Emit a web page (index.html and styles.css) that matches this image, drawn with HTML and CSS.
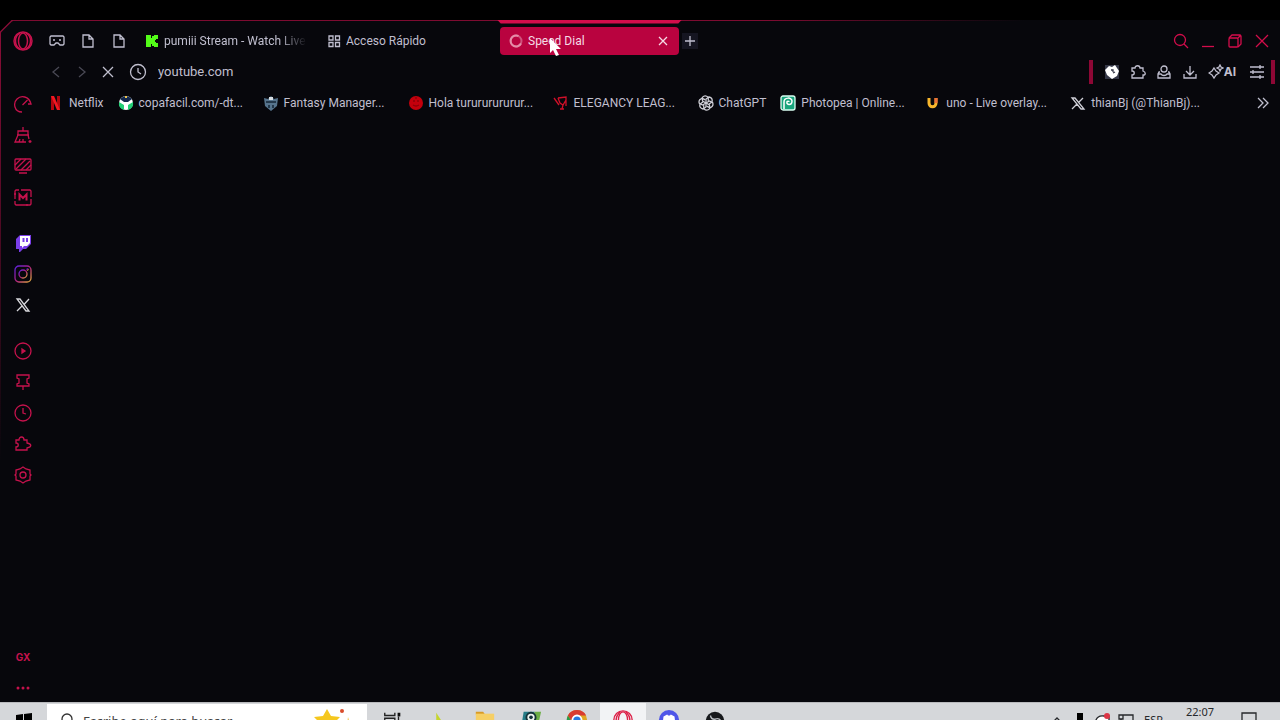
FILE: index.html
```html
<!DOCTYPE html>
<html lang="es">
<head>
    <meta charset="UTF-8">
    <title>Speed Dial</title>
    <link rel="stylesheet" href="styles.css">
</head>
<body>
    <div class="browser">
        <svg class="corner" viewBox="0 0 13 13"><path class="cut" d="M0 0H12L0 12Z"/><path d="M13 .5H12L.5 12V13"/></svg>

        <nav class="sidebar" aria-label="Barra lateral">
            <button class="side-btn logo" aria-label="Opera GX"><svg viewBox="0 0 20 20"><circle cx="10" cy="10" r="9"/><ellipse cx="10" cy="10" rx="4.500" ry="8"/><path d="M7 2C1 5 1 15 7 18M13 2c6 3 6 13 0 16"/></svg></button>

            <div class="side-group">
                <button class="side-btn" aria-label="GX Control"><svg viewBox="0 0 18 18"><path d="M8 17C0 17-1 8 3 4s12-3 14 5h-3M8.500 10l5-5"/></svg></button>
                <button class="side-btn" aria-label="GX Cleaner"><svg viewBox="0 0 18 18"><path d="M9 1v4M4 9V5h10v4M3 9h12M4 9l-3 7h11M14 9l1 4M5 16l1-3M9 16v-3"/><path d="M16 14v3M14.500 15.500h3"/></svg></button>
                <button class="side-btn" aria-label="Fondos"><svg viewBox="0 0 18 18"><rect x="1" y="2" width="16" height="11" rx="1"/><path d="M1 8l6-6M2 12L12 2M7 13l9-9M12 13l5-5M5 16h8"/></svg></button>
                <button class="side-btn" aria-label="Mods"><svg viewBox="0 0 18 18"><path d="M17 11v5l-1 1H2l-1-1v-3M1 11V3l1-1h3M7 2h9l1 1v6M0 6h2M13 16v2"/><path class="bold" d="M5.500 12.500V6.500L9 10l3.500-3.500v6"/></svg></button>
            </div>

            <div class="side-group">
                <button class="side-btn" aria-label="Twitch"><svg viewBox="0 0 18 18"><path fill="#7a3ee8" stroke="none" d="M2 5l4-4h11v9l-5 5H9l-3 3H5v-3H2z"/><path fill="#fff" stroke="none" d="M6 2h10v7l-3 3h-3l-2 2v-2H6z"/><path stroke="#7a3ee8" stroke-width="2" d="M9.500 4v4M13 4v4"/></svg></button>
                <button class="side-btn" aria-label="Instagram"><svg viewBox="0 0 18 18"><defs><linearGradient id="ig" x1="0" y1="0" x2="1" y2="1"><stop offset="0" stop-color="#5a22e0"/><stop offset=".5" stop-color="#b02080"/><stop offset="1" stop-color="#e8b53d"/></linearGradient></defs><g stroke="url(#ig)"><rect x="1" y="1" width="16" height="16" rx="4"/><circle cx="9" cy="9" r="4"/><circle cx="13.500" cy="4.500" r=".5"/></g></svg></button>
                <button class="side-btn x" aria-label="X"><svg viewBox="0 0 18 18"><path d="M3 3h3l9 12h-3zM15 3l-5 5.500M8 10l-5 5"/></svg></button>
            </div>

            <div class="side-group">
                <button class="side-btn" aria-label="Reproductor"><svg viewBox="0 0 18 18"><circle cx="9" cy="9" r="8"/><path class="solid" d="M8 7l3 2-3 2z"/></svg></button>
                <button class="side-btn" aria-label="Tableros"><svg viewBox="0 0 18 18"><path d="M3 2h12v3l-2 1v4l2 1v2H3v-2l2-1V6L3 5zM9 13v4"/></svg></button>
                <button class="side-btn" aria-label="Historial"><svg viewBox="0 0 18 18"><circle cx="9" cy="9" r="8"/><path d="M9 4v5l3 1"/></svg></button>
                <button class="side-btn" aria-label="Extensiones"><svg viewBox="0 0 18 18"><path d="M2 15v-3c3 0 3-4 0-4V5h3c0-4 5-4 5 0h3v3c5 1 5 4 0 5v2z"/></svg></button>
                <button class="side-btn" aria-label="Ajustes"><svg viewBox="0 0 18 18"><path d="M9 1l3 2 4 1v4l1 1-1 1v4l-4 1-3 2-3-2-4-1v-4L1 9l1-1V4l4-1z"/><circle cx="9" cy="9" r="3"/></svg></button>
            </div>

            <div class="side-group bottom">
                <button class="side-btn gx">GX</button>
                <button class="side-btn" aria-label="Más"><svg viewBox="0 0 18 18"><g class="solid dots"><circle cx="4" cy="9" r="1.500"/><circle cx="9" cy="9" r="1.500"/><circle cx="14" cy="9" r="1.500"/></g></svg></button>
            </div>
        </nav>

        <main class="main">
            <div class="tabbar">
                <button class="pin" aria-label="GX Corner"><svg viewBox="0 0 16 16"><path d="M2 3h12l1 1v7l-1 1h-3l-2-2H7l-2 2H2l-1-1V4z"/><path d="M4 7h2M10 7h2"/></svg></button>
                <button class="pin" aria-label="Pestaña fijada 1"><svg viewBox="0 0 16 16"><path d="M3 2h6l4 4v8H3zM9 2v4h4"/></svg></button>
                <button class="pin" aria-label="Pestaña fijada 2"><svg viewBox="0 0 16 16"><path d="M3 2h6l4 4v8H3zM9 2v4h4"/></svg></button>

                <div class="tabs">
                    <button class="tab"><svg viewBox="0 0 16 16"><path fill="#53fc18" stroke="none" d="M2 2h5v3h1V3h2V2h4v4h-2v1h-1v2h1v1h2v4h-4v-1H8v-2H7v3H2z"/></svg><span class="tab-title fade">pumiii Stream - Watch Live</span></button>
                    <button class="tab"><svg viewBox="0 0 16 16"><path d="M3 3h4v4H3zM9.500 3h4v4h-4zM3 9.500h4v4H3zM9.500 9.500h4v4h-4z"/></svg><span class="tab-title">Acceso Rápido</span></button>
                    <div class="tab active">
                        <svg viewBox="0 0 16 16"><circle class="spin-track" cx="8" cy="8" r="5.500"/><path class="spin" d="M13 10.500A5.500 5.500 0 1 1 10.500 3"/></svg>
                        <span class="tab-title">Speed Dial</span>
                        <button class="close" aria-label="Cerrar pestaña"><svg viewBox="0 0 16 16"><path d="M4 4l8 8M12 4l-8 8"/></svg></button>
                        <svg class="cursor" viewBox="0 0 12 18"><path d="M0 0v15l3-3 3 6 3-1-3-6h5z"/></svg>
                    </div>
                    <button class="new-tab" aria-label="Nueva pestaña"><svg viewBox="0 0 14 14"><path d="M7 2v10M2 7h10"/></svg></button>
                </div>

                <div class="window-controls">
                    <button aria-label="Buscar"><svg viewBox="0 0 16 16"><circle cx="7" cy="7" r="5.500"/><path d="M11 11l4 4"/></svg></button>
                    <button aria-label="Minimizar"><svg viewBox="0 0 16 16"><path d="M2 13.500h12"/></svg></button>
                    <button aria-label="Restaurar"><svg viewBox="0 0 16 16"><rect x="2" y="5" width="9" height="9" rx="1"/><path d="M2 5l3-3h8l1 1v8l-3 3M11 5l3-3"/></svg></button>
                    <button aria-label="Cerrar"><svg viewBox="0 0 16 16"><path d="M2 2l12 12M14 2L2 14"/></svg></button>
                </div>
            </div>

            <div class="addressbar">
                <button class="dim" aria-label="Atrás"><svg viewBox="0 0 16 16"><path d="M11 3L5 8l6 5"/></svg></button>
                <button class="dim" aria-label="Adelante"><svg viewBox="0 0 16 16"><path d="M5 3l6 5-6 5"/></svg></button>
                <button aria-label="Detener"><svg viewBox="0 0 16 16"><path d="M3 3l10 10M13 3L3 13"/></svg></button>
                <label class="url-icon" for="url" aria-label="Dirección"><svg viewBox="0 0 18 18"><circle cx="9" cy="9" r="7.500"/><path d="M9 5v4l3 2"/></svg></label>
                <input class="url" id="url" type="text" value="youtube.com">

                <div class="extensions">
                    <button aria-label="BetterTTV"><svg viewBox="0 0 16 16"><path fill="#343747" stroke="none" d="M1 1h14v14H1z"/><path fill="#fff" stroke="none" d="M1 6l4-4 3 1 3-2 4 6-2 5-5 3-5-4z"/><path stroke="#343747" d="M7 6l2 0v2M9 9l2-1"/></svg></button>
                    <button aria-label="Extensiones"><svg viewBox="0 0 16 16"><path d="M2 14v-3c3 0 3-4 0-4V4h3c0-3 5-3 5 0h3v3c3 1 3 4 0 4v3z"/></svg></button>
                    <button aria-label="Perfil"><svg viewBox="0 0 16 16"><circle cx="8" cy="5" r="3"/><path d="M4 8H3l-1 2v4h12v-4l-1-2h-1M2 10h3c1 2 5 2 6 0h3"/></svg></button>
                    <button aria-label="Descargas"><svg viewBox="0 0 16 16"><path d="M8 2v9M4 7l4 4 4-4M2 10v4h12v-4"/></svg></button>
                    <button class="ai"><svg viewBox="0 0 16 16"><path d="M6 4l2 3 3 2-3 2-2 3-2-3-3-2 3-2zM12 1l1 2 2 1-2 1-1 2-1-2-2-1 2-1z"/></svg>AI</button>
                    <button aria-label="Configuración fácil"><svg viewBox="0 0 16 16"><path d="M1 3h14M1 8h14M1 13h14M11 1v4M4 6v4M11 11v4"/></svg></button>
                </div>
            </div>

            <div class="bookmarks">
                <a class="bookmark" href="#"><svg viewBox="0 0 16 16"><path fill="#b1060f" d="M3 1h3v14H3zM9 1h3v14H9z"/><path fill="#f01822" d="M3 1h3l6 14H9z"/></svg>Netflix</a>
                <a class="bookmark wide" href="#"><svg viewBox="0 0 16 16"><circle cx="8" cy="8" r="7" fill="#fff"/><path fill="#13284c" d="M2 4q6-6 12 0l-4 3H6z"/><path fill="#22cf75" d="M1 7l5 3v5Q0 13 1 7zM15 7l-5 3v5q6-2 5-8z"/><path fill="#f1c54d" d="M7 1h2v2H7z"/></svg>copafacil.com/-dt...</a>
                <a class="bookmark wide" href="#"><svg viewBox="0 0 16 16"><path fill="#56748d" d="M1 3l4 1 3-3 3 3 4-1-1 8-6 5-6-5z"/><path fill="#d6dce1" d="M6 2h4v3H6z"/><path fill="#24394c" d="M3 6h10v2H3zM5 10h2v3H5zM9 10h2v3H9z"/></svg>Fantasy Manager...</a>
                <a class="bookmark wide" href="#"><svg viewBox="0 0 16 16"><circle cx="8" cy="8" r="7" fill="#c4000c"/><path fill="none" stroke="#8c0008" d="M5 6h2M9 6h2M5 10q3 2 6 0M8 2v2"/></svg>Hola turururururur...</a>
                <a class="bookmark wide" href="#"><svg viewBox="0 0 16 16"><path fill="none" stroke="#d01029" d="M1 3l5 7M5 3l8-1v3l-3 5-3-2-2-5M10 10l-1 4M7 14h4M13 2v9"/></svg>ELEGANCY LEAG...</a>
                <a class="bookmark" href="#"><svg viewBox="0 0 16 16"><g fill="none" stroke="#d0d0d8"><path id="petal" d="M8 8V4l3-2q4 1 3 5l-3 2"/><use href="#petal" transform="rotate(60 8 8)"/><use href="#petal" transform="rotate(120 8 8)"/><use href="#petal" transform="rotate(180 8 8)"/><use href="#petal" transform="rotate(240 8 8)"/><use href="#petal" transform="rotate(300 8 8)"/></g></svg>ChatGPT</a>
                <a class="bookmark wide" href="#"><svg viewBox="0 0 16 16"><rect x="1" y="1" width="14" height="14" rx="2" fill="#18a47c" stroke="#d9fff2"/><path fill="none" stroke="#fff" stroke-width="1.500" d="M4 14V7c0-5 8-5 8-1 0 5-6 4-5 1 0-1 2-1 2 0"/></svg>Photopea | Online...</a>
                <a class="bookmark wide" href="#"><svg viewBox="0 0 16 16"><path fill="none" stroke="#f8b62c" stroke-width="3" d="M4 3v5c0 5 7 5 7 0V3"/><path fill="none" stroke="#ee7038" stroke-width="3" d="M11 3v5"/></svg>uno - Live overlay...</a>
                <a class="bookmark wide" href="#"><svg viewBox="0 0 16 16"><path fill="none" stroke="#d0d0d8" d="M2 3h3l9 11h-3zM13 3L9 7M7 9l-5 5"/></svg>thianBj (@ThianBj)...</a>
                <button class="more" aria-label="Más marcadores"><svg viewBox="0 0 16 16"><path d="M4 3l5 5-5 5M9 3l5 5-5 5"/></svg></button>
            </div>
        </main>
    </div>

    <footer class="taskbar">
        <button class="start" aria-label="Inicio"><svg viewBox="0 0 16 16"><path d="M0 2l7-1v7H0zM8 1l8-1v8H8zM0 9h7v6l-7-1zM8 9h8v7l-8-1z"/></svg></button>
        <div class="search">
            <svg viewBox="0 0 16 16"><circle cx="8" cy="6" r="5"/><path d="M5 10l-5 5"/></svg>
            <input type="text" placeholder="Escribe aquí para buscar" aria-label="Escribe aquí para buscar">
            <svg class="star" viewBox="0 0 40 30"><path fill="#f5c71e" d="M12 3l4 7 9 1-7 7 2 9-8-4-8 4 2-9-7-7 9-1z"/><circle cx="27" cy="5" r="2" fill="#d94b2b"/><path fill="#f3cc55" d="M33 11l1 3 3 1-5 3z"/></svg>
        </div>
        <div class="apps">
            <button aria-label="Vista de tareas"><svg viewBox="0 0 24 24"><path fill="none" stroke="#222" stroke-width="1.500" d="M3 3v3h11V3M3 9h11v7H3zM18 7v11"/><path fill="#111" d="M17 3h3v4h-3z"/></svg></button>
            <button aria-label="Editor"><svg viewBox="0 0 24 24"><path fill="#c5d52b" d="M9 3l11 17H9z"/></svg></button>
            <button aria-label="Explorador de archivos"><svg viewBox="0 0 24 24"><path fill="#d99b26" d="M2 2h8l2 3H2z"/><path fill="#f6cf65" d="M2 4h20v16H2z"/></svg></button>
            <button aria-label="Juego"><svg viewBox="0 0 24 24"><path fill="#267c86" d="M4 2h12l-2 18H1z"/><path fill="#6cae45" d="M16 2h7l-4 18h-6z"/><circle cx="12" cy="8" r="5" fill="#eef4ef" stroke="#143238" stroke-width="2"/><circle cx="12" cy="8" r="2" fill="#143238"/></svg></button>
            <button aria-label="Chrome"><svg viewBox="0 0 24 24"><circle cx="12" cy="11" r="11" fill="#e0a723"/><path fill="#d93b30" d="M2 6q3-6 10-6t10 6H12L7 13z"/><path fill="#2c9a4c" d="M2 6l6 9 2 7Q-3 18 2 6z"/><circle cx="12" cy="11" r="5" fill="#2878df" stroke="#fff" stroke-width="2"/></svg></button>
            <button class="current" aria-label="Opera GX"><svg viewBox="0 0 24 24"><g fill="none" stroke="#dc2148" stroke-width="1.500"><circle cx="12" cy="11" r="10"/><ellipse cx="12" cy="11" rx="5" ry="9"/><path d="M9 2Q0 11 9 20M15 2q9 9 0 18"/></g></svg></button>
            <button aria-label="Discord"><svg viewBox="0 0 24 24"><circle cx="12" cy="11" r="11" fill="#4f56e8"/><path fill="#fff" d="M6 7l4-2 1 1h2l1-1 4 2 1 8-4 2-1-2h-4l-1 2-4-2z"/></svg></button>
            <button aria-label="OBS"><svg viewBox="0 0 24 24"><circle cx="12" cy="12" r="10" fill="#17191c"/><path fill="none" stroke="#b7bbc0" stroke-width="1.500" d="M7 6q1 5 6 4M12 10q5-2 7 3M11 13q-4 2-2 6"/></svg></button>
        </div>
        <div class="tray">
            <svg viewBox="0 0 16 16"><path d="M4 10l4-4 4 4"/></svg>
            <svg viewBox="0 0 16 16"><path fill="#000" stroke="none" d="M5 1h6v15H5z"/></svg>
            <svg viewBox="0 0 16 16"><path fill="#fff" d="M1 8q2-5 8-4h5v9H1z"/><circle cx="12" cy="4" r="3" fill="#dc3545" stroke="none"/></svg>
            <svg viewBox="0 0 16 16"><path d="M5 3h10v10H3M1 3h4v4H1zM3 7v6"/></svg>
            <span class="lang">ESP</span>
            <time>22:07</time>
            <svg class="notice" viewBox="0 0 16 16"><path d="M1 1h14v11H9l-3 3v-3H1z"/></svg>
        </div>
    </footer>
</body>
</html>
```

FILE: styles.css
```css
* {
    box-sizing: border-box;
}
body {
    margin: 0;
    height: 100vh;
    display: flex;
    flex-direction: column;
    overflow: hidden;
    padding-top: 20px;
    background: #000;
    color: #c0bfcf;
    font: 12px/16px Roboto, "Liberation Sans", sans-serif;
}
button {
    display: flex;
    align-items: center;
    justify-content: center;
    flex: none;
    margin: 0;
    padding: 0;
    border: 0;
    background: none;
    color: inherit;
    font: inherit;
}
svg {
    display: block;
    flex: none;
    width: 16px;
    height: 16px;
    fill: none;
    stroke: currentColor;
    stroke-width: 1.3;
}

/* window */
.browser {
    position: relative;
    flex: 1;
    min-height: 0;
    display: flex;
    background: linear-gradient(to right, #7d0b31 60%, #07070c 80%) top / 100% 1px no-repeat #07070c;
}
.browser::before {
    content: "";
    position: absolute;
    left: 0;
    top: 12px;
    width: 1px;
    height: 430px;
    background: linear-gradient(#8a0d37, transparent);
}
.corner {
    position: absolute;
    left: 0;
    top: 0;
    width: 13px;
    height: 13px;
    color: #8a0d37;
}
.cut {
    fill: #000;
    stroke: none;
}

/* sidebar */
.sidebar {
    width: 46px;
    padding-top: 5px;
    display: flex;
    flex-direction: column;
    color: #c5124c;
}
.side-btn {
    width: 46px;
    height: 31px;
}
.side-btn svg {
    width: 18px;
    height: 18px;
}
.side-btn.logo svg {
    width: 20px;
    height: 20px;
    stroke-width: 1.5;
}
.side-btn.x {
    color: #d8d8dc;
}
.logo {
    margin-bottom: 17px;
}
.side-group {
    margin-top: 15px;
}
.side-group.bottom {
    margin-top: auto;
    display: grid;
    gap: 3px;
}
.bottom .side-btn {
    height: 28px;
}
.gx {
    font: 700 10px/16px Inter, sans-serif;
}
.bold {
    stroke-width: 2;
}
.solid {
    fill: currentColor;
}
.dots {
    stroke: none;
}

/* tabs */
.main {
    flex: 1;
    min-width: 0;
    padding-top: 5px;
}
.tabbar, .addressbar, .bookmarks {
    display: flex;
    align-items: center;
    height: 31px;
}
.tabbar {
    margin-left: -5px;
}
.pin {
    width: 31px;
    height: 31px;
}
.tabs {
    flex: 1;
    min-width: 0;
    display: flex;
    align-items: center;
    gap: 3px;
    padding-left: 2px;
}
.tab {
    position: relative;
    display: flex;
    justify-content: flex-start;
    align-items: center;
    gap: 4px;
    flex: 0 1 179px;
    min-width: 0;
    height: 28px;
    padding: 0 8px;
    border-radius: 4px;
}
.tab-title {
    flex: 1;
    overflow: hidden;
    white-space: nowrap;
    text-align: left;
}
.fade {
    -webkit-mask: linear-gradient(to right, #000 80%, transparent);
    mask: linear-gradient(to right, #000 80%, transparent);
}
.tab.active {
    background: #b9033f;
    color: #f5dbe5;
}
.tab.active::before {
    content: "";
    position: absolute;
    left: -3px;
    right: -3px;
    top: -7px;
    height: 4px;
    background: #d30d4b;
    clip-path: polygon(0 0, 100% 0, 98% 100%, 2% 100%);
}
.spin-track {
    stroke: #cf527c;
    stroke-width: 2;
}
.spin {
    stroke: #e58ca8;
    stroke-width: 2;
}
.cursor {
    position: absolute;
    left: 50px;
    top: 11px;
    width: 12px;
    height: 18px;
    fill: #fff;
    stroke: none;
}
.new-tab {
    width: 16px;
    height: 16px;
    background: #151521;
}
.new-tab svg {
    width: 14px;
    height: 14px;
}
.window-controls {
    display: flex;
    gap: 11px;
    padding-right: 10px;
    color: #d30d4b;
}

/* address */
.addressbar {
    padding-left: 2px;
    gap: 10px;
}
.addressbar > .dim {
    color: #4a4955;
}
.url-icon {
    margin: 0 1px 0 3px;
}
.url-icon svg {
    width: 18px;
    height: 18px;
}
.url {
    flex: 1;
    min-width: 0;
    padding: 0;
    border: 0;
    outline: 0;
    background: none;
    color: inherit;
    font: 13px/16px Roboto, "Liberation Sans", sans-serif;
}
.extensions {
    display: flex;
    align-items: center;
    gap: 10px;
    height: 24px;
    padding: 0 6px 0 11px;
    margin-right: 5px;
    border: solid #8d0735;
    border-width: 0 4px;
}
.ai {
    margin-right: 3px;
    font: 700 12px/16px Inter, sans-serif;
}

/* bookmarks */
.bookmarks {
    gap: 14px;
    padding: 0 10px 0 2px;
    white-space: nowrap;
}
.bookmark {
    display: flex;
    align-items: center;
    gap: 5px;
    color: inherit;
    text-decoration: none;
}
.bookmark svg {
    stroke: none;
}
.bookmark.wide {
    flex: 0 0 131px;
}
.more {
    margin-left: auto;
}

/* taskbar, its lower part runs off the screen */
.taskbar {
    height: 18px;
    flex: none;
    display: flex;
    align-items: flex-start;
    overflow: hidden;
    background: #d5d7da;
    color: #26282b;
    border-top: 1px solid #b9babd;
    font: 11px/16px "Noto Sans", sans-serif;
}
.taskbar svg {
    stroke: none;
}
.start {
    width: 47px;
    height: 36px;
}
.start svg {
    fill: #000;
}
.search {
    display: flex;
    align-items: center;
    width: 320px;
    height: 34px;
    margin-top: 1px;
    padding: 0 8px 0 12px;
    gap: 8px;
    background: #fff;
}
.taskbar .search > svg {
    stroke: #333;
}
.search input {
    flex: 1;
    min-width: 0;
    padding: 0;
    border: 0;
    background: none;
    font: 13px/18px "Noto Sans", sans-serif;
}
.search input::placeholder {
    color: #444;
}
.taskbar .search .star {
    width: 48px;
    height: 30px;
    stroke: none;
}
.apps {
    display: flex;
    margin-left: 3px;
}
.apps button {
    width: 46px;
    height: 36px;
}
.apps svg {
    width: 22px;
    height: 22px;
}
.apps .current {
    background: #f2f3f5;
}
.tray {
    display: flex;
    align-items: center;
    height: 34px;
    margin-left: auto;
    padding-right: 23px;
    gap: 7px;
}
.taskbar .tray svg {
    stroke: #26282b;
}
.lang {
    margin-left: 3px;
}
time {
    align-self: flex-start;
    margin: 1px 20px 0 16px;
}
```
